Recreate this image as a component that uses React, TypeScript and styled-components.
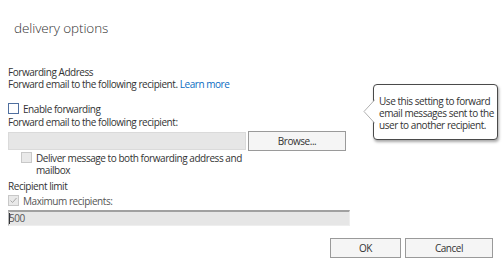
import React from 'react';
import styled, {createGlobalStyle} from 'styled-components';

const GlobalStyle = createGlobalStyle`
  html, body {
    margin: 0;
    padding: 0;
    background: #ffffff;
  }
  body {
    font-family: 'Segoe UI', 'Open Sans', 'Noto Sans', sans-serif;
    font-size: 10px;
    letter-spacing: -0.45px;
    color: #333333;
  }
`;

const Page = styled.div`
  position: relative;
  width: 504px;
  height: 273px;
  box-sizing: border-box;
  padding: 0 8px;
  overflow: hidden;
`;

const Title = styled.h1`
  margin: 0;
  padding: 18px 0 0 6px;
  height: 20px;
  font-size: 13.5px;
  line-height: 20px;
  font-weight: 300;
  letter-spacing: -0.1px;
  color: #333333;
`;

const Line = styled.div<{$top?: number; $indent?: number}>`
  margin-top: ${(p) => p.$top ?? 0}px;
  padding-left: ${(p) => p.$indent ?? 0}px;
  line-height: 12px;
  height: 12px;
  white-space: nowrap;
`;

const Link = styled.a`
  color: #0a6cc2;
  text-decoration: none;
`;

const CheckRow = styled.label<{$top?: number; $indent?: number}>`
  display: flex;
  align-items: flex-start;
  gap: 4px;
  margin-top: ${(p) => p.$top ?? 0}px;
  padding-left: ${(p) => p.$indent ?? 0}px;
  line-height: 12px;
`;

const Box = styled.span<{$variant: 'active' | 'disabled'}>`
  flex: none;
  box-sizing: border-box;
  width: 11px;
  height: 11px;
  display: flex;
  align-items: center;
  justify-content: center;
  border: 1px solid ${(p) => (p.$variant === 'active' ? '#4f6f9f' : '#c8c8c8')};
  background: ${(p) => (p.$variant === 'active' ? '#ffffff' : '#e9e9e9')};
`;

const BoxText = styled.span<{$muted?: boolean}>`
  color: ${(p) => (p.$muted ? '#555555' : '#333333')};
  white-space: nowrap;
`;

const InputRow = styled.div`
  display: flex;
  align-items: center;
  gap: 2px;
  margin-top: 3px;
  height: 20px;
`;

const Field = styled.div<{$width: number}>`
  box-sizing: border-box;
  width: ${(p) => p.$width}px;
  height: 18px;
  background: #e6e6e6;
  border: 1px solid #dadada;
`;

const Button = styled.button<{$width: number}>`
  box-sizing: border-box;
  width: ${(p) => p.$width}px;
  height: 20px;
  padding: 0;
  background: #f5f5f5;
  border: 1px solid #9a9a9a;
  font-family: inherit;
  font-size: 10px;
  letter-spacing: -0.45px;
  color: #333333;
`;

const NumberField = styled.div`
  box-sizing: border-box;
  width: 342px;
  height: 16px;
  margin-top: 3px;
  background: #e6e6e6;
  border-top: 2px solid #a0a0a0;
  border-left: 1px solid #b8b8b8;
  border-right: 1px solid #eeeeee;
  border-bottom: 1px solid #eeeeee;
  line-height: 13px;
  color: #555555;
`;

const Caret = styled.span`
  display: inline-block;
  width: 1px;
  height: 11px;
  vertical-align: -2px;
  background: #333333;
  margin-right: -1px;
`;

const Footer = styled.div`
  display: flex;
  justify-content: flex-end;
  gap: 4px;
  margin-top: 12px;
  padding-right: 3px;
`;

const Tooltip = styled.div`
  position: absolute;
  left: 373px;
  top: 84px;
  box-sizing: border-box;
  width: 125px;
  height: 56px;
  padding: 10px 0 0 5px;
  background: #ffffff;
  border: 1px solid #4a4a4a;
  border-radius: 4px;
  box-shadow: 1px 2px 3px rgba(0, 0, 0, 0.35);
  line-height: 12px;
  white-space: nowrap;
  color: #333333;
`;

const Arrow = styled.svg`
  position: absolute;
  left: -11px;
  top: 14px;
`;

const Check = () => (
  <svg width="9" height="9" viewBox="0 0 9 9">
    <path d="M1.5 4.5 L3.5 6.5 L7.5 2" fill="none" stroke="#a8a8a8" strokeWidth="1" />
  </svg>
);

export default function App() {
  return (
    <Page>
      <GlobalStyle />
      <Title>delivery options</Title>
      <Line $top={28}>Forwarding Address</Line>
      <Line>
        Forward email to the following recipient. <Link>Learn more</Link>
      </Line>
      <CheckRow $top={13}>
        <Box $variant="active" />
        <BoxText>Enable forwarding</BoxText>
      </CheckRow>
      <Line $top={1}>Forward email to the following recipient:</Line>
      <InputRow>
        <Field $width={238} />
        <Button $width={98}>Browse...</Button>
      </InputRow>
      <CheckRow $top={1} $indent={13}>
        <Box $variant="disabled" />
        <BoxText>
          Deliver message to both forwarding address and
          <br />
          mailbox
        </BoxText>
      </CheckRow>
      <Line $top={4}>Recipient limit</Line>
      <CheckRow $top={3}>
        <Box $variant="disabled">
          <Check />
        </Box>
        <BoxText $muted>Maximum recipients:</BoxText>
      </CheckRow>
      <NumberField>
        <Caret />
        500
      </NumberField>
      <Footer>
        <Button $width={71}>OK</Button>
        <Button $width={88}>Cancel</Button>
      </Footer>
      <Tooltip>
        <Arrow width="12" height="26" viewBox="0 0 12 26">
          <path d="M12 0.5 L1 12.5 L12 24.5" fill="#ffffff" stroke="#b0b0b0" strokeWidth="1" />
        </Arrow>
        Use this setting to forward
        <br />
        email messages sent to the
        <br />
        user to another recipient.
      </Tooltip>
    </Page>
  );
}
